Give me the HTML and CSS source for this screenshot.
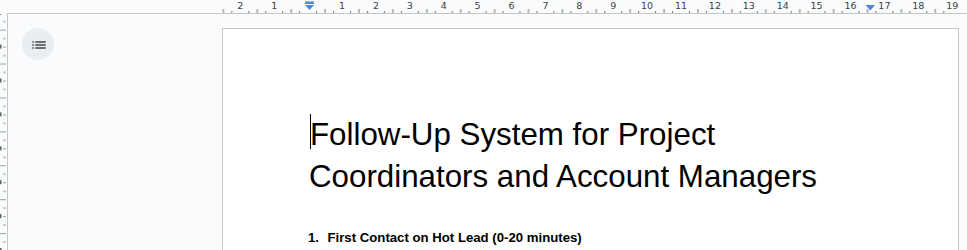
FILE: index.html
```html
<!DOCTYPE html>
<html lang="en">
<head>
<meta charset="utf-8">
<title>Follow-Up System</title>
<link rel="stylesheet" href="styles.css">
</head>
<body>
<div class="app">
  <svg class="hruler" width="967" height="14" viewBox="0 0 967 14">
    <defs>
      <pattern id="hticks" x="308.1" y="0" width="33.9" height="14" patternUnits="userSpaceOnUse">
        <rect x="8" y="11" width="1" height="2" class="tick"/>
        <rect x="16.5" y="9" width="1" height="4" class="tick"/>
        <rect x="25" y="11" width="1" height="2" class="tick"/>
      </pattern>
    </defs>
    <rect x="222" y="0" width="737" height="13" fill="url(#hticks)" shape-rendering="crispEdges"/>
    <rect x="7" y="13" width="960" height="1" class="rule-line"/>
    <g class="ruler-nums">
      <text x="240.3" y="9">2</text>
      <text x="274.2" y="9">1</text>
      <text x="342" y="9">1</text>
      <text x="375.9" y="9">2</text>
      <text x="409.8" y="9">3</text>
      <text x="443.7" y="9">4</text>
      <text x="477.6" y="9">5</text>
      <text x="511.5" y="9">6</text>
      <text x="545.4" y="9">7</text>
      <text x="579.3" y="9">8</text>
      <text x="613.2" y="9">9</text>
      <text x="647.1" y="9">10</text>
      <text x="681" y="9">11</text>
      <text x="714.9" y="9">12</text>
      <text x="748.8" y="9">13</text>
      <text x="782.7" y="9">14</text>
      <text x="816.6" y="9">15</text>
      <text x="850.5" y="9">16</text>
      <text x="884.4" y="9">17</text>
      <text x="918.3" y="9">18</text>
      <text x="952.2" y="9">19</text>
    </g>
    <g class="marker">
      <rect x="305" y="1.5" width="9" height="2.5"/>
      <polygon points="305,5 314,5 309.5,10"/>
      <polygon points="865.5,5 875,5 870.3,10.5"/>
    </g>
  </svg>
  <div class="workspace">
    <svg class="vruler" width="8" height="236" viewBox="0 0 8 236">
      <defs>
        <pattern id="vticks" x="0" y="96.4" width="8" height="33.9" patternUnits="userSpaceOnUse">
          <rect x="0" y="2" width="1.5" height="4" class="num-mark"/>
          <rect x="3" y="4" width="3" height="1" class="tick-light"/>
          <rect x="3" y="12.5" width="3" height="1" class="tick-light"/>
          <rect x="0" y="21" width="6" height="1" class="tick-light"/>
          <rect x="3" y="29.4" width="3" height="1" class="tick-light"/>
        </pattern>
      </defs>
      <rect x="0" y="0" width="7" height="236" fill="url(#vticks)" shape-rendering="crispEdges"/>
      <rect x="7" y="0" width="1" height="236" class="rule-line"/>
    </svg>
    <aside class="sidebar">
      <button class="outline-btn" type="button" aria-label="Show document outline">
        <svg width="18" height="18" viewBox="0 0 24 24"><path d="M3 13h2v-2H3v2zm0 4h2v-2H3v2zm0-8h2V7H3v2zm4 4h14v-2H7v2zm0 4h14v-2H7v2zM7 7v2h14V7H7z"/></svg>
      </button>
    </aside>
    <main class="canvas">
      <div class="page">
        <h1 class="title"><span class="caret"></span>Follow-Up System for Project Coordinators and Account Managers</h1>
        <ol class="steps">
          <li><span class="num">1.</span><span>First Contact on Hot Lead (0-20 minutes)</span></li>
        </ol>
      </div>
    </main>
  </div>
</div>
</body>
</html>
```

FILE: styles.css
```css
html, body {
  margin: 0;
  padding: 0;
}
body {
  width: 967px;
  height: 250px;
  overflow: hidden;
  background: #f9fbfd;
  font-family: "Liberation Sans", Arial, sans-serif;
}
.app {
  display: flex;
  flex-direction: column;
  height: 250px;
  overflow: hidden;
}
.hruler {
  display: block;
  flex: none;
}
.tick {
  fill: #747775;
}
.tick-light {
  fill: #9aa0a6;
}
.num-mark {
  fill: #5f6368;
}
.rule-line {
  fill: #c4c7c5;
}
.ruler-nums text {
  font-family: "DejaVu Sans", "Liberation Sans", sans-serif;
  font-size: 9.5px;
  fill: #3c4043;
  text-anchor: middle;
}
.marker {
  fill: #4a86e8;
}
.workspace {
  display: flex;
  height: 236px;
  overflow: hidden;
}
.vruler {
  display: block;
  flex: none;
}
.sidebar {
  flex: none;
  width: 200px;
  padding: 14px 0 0 14px;
}
.outline-btn {
  width: 32px;
  height: 32px;
  border: 0;
  padding: 0;
  border-radius: 50%;
  background: #e9ecf1;
  display: flex;
  align-items: center;
  justify-content: center;
}
.outline-btn svg {
  fill: #444746;
  margin-left: 1px;
  margin-top: 1px;
}
.canvas {
  flex: none;
  height: 236px;
  padding-top: 14px;
  box-sizing: border-box;
  overflow: hidden;
}
.page {
  box-sizing: border-box;
  width: 737px;
  height: 400px;
  background: #ffffff;
  border: 1px solid #c7c7c7;
  padding: 85.4px 86px 0 86px;
}
.title {
  margin: 0 0 32px;
  font-size: 31.3px;
  font-weight: normal;
  line-height: 41.3px;
  color: #000;
}
.caret {
  display: inline-block;
  width: 1px;
  height: 35px;
  background: #000;
  vertical-align: -4px;
  margin-left: 1px;
  margin-right: -1px;
}
.steps {
  list-style: none;
  margin: 0 0 0 -1px;
  padding: 0;
  font-size: 13.2px;
  font-weight: bold;
  line-height: 17.5px;
  color: #000;
}
.steps li {
  display: flex;
}
.num {
  flex: none;
  width: 19.5px;
}
```
